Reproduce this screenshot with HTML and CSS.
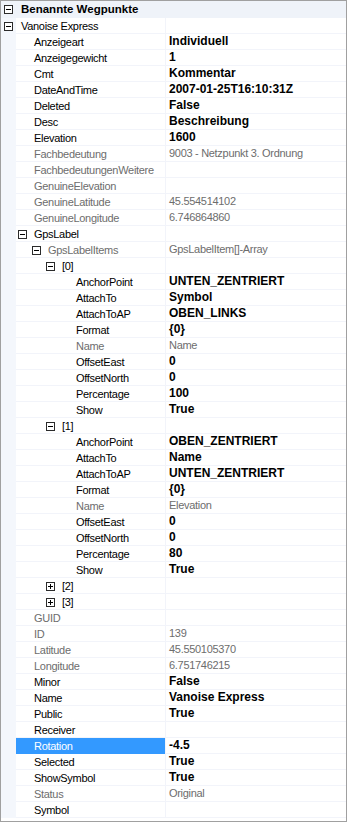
FILE: index.html
```html
<!DOCTYPE html>
<html>
<head>
<meta charset="utf-8">
<link rel="stylesheet" href="styles.css">
</head>
<body>
<div class="grid">
  <div class="cat"><span class="mg"><i class="tog"></i></span><span class="catname">Benannte Wegpunkte</span></div>

  <div class="row"><span class="mg"><i class="tog"></i></span><span class="nm p0">Vanoise Express</span><span class="vl"></span></div>

  <div class="row"><span class="mg"></span><span class="nm p1">Anzeigeart</span><span class="vl b">Individuell</span></div>
  <div class="row"><span class="mg"></span><span class="nm p1">Anzeigegewicht</span><span class="vl b">1</span></div>
  <div class="row"><span class="mg"></span><span class="nm p1">Cmt</span><span class="vl b">Kommentar</span></div>
  <div class="row"><span class="mg"></span><span class="nm p1">DateAndTime</span><span class="vl b">2007-01-25T16:10:31Z</span></div>
  <div class="row"><span class="mg"></span><span class="nm p1">Deleted</span><span class="vl b">False</span></div>
  <div class="row"><span class="mg"></span><span class="nm p1">Desc</span><span class="vl b">Beschreibung</span></div>
  <div class="row"><span class="mg"></span><span class="nm p1">Elevation</span><span class="vl b">1600</span></div>
  <div class="row"><span class="mg"></span><span class="nm p1 ro">Fachbedeutung</span><span class="vl ro">9003 - Netzpunkt 3. Ordnung</span></div>
  <div class="row"><span class="mg"></span><span class="nm p1 ro">FachbedeutungenWeitere</span><span class="vl"></span></div>
  <div class="row"><span class="mg"></span><span class="nm p1 ro">GenuineElevation</span><span class="vl"></span></div>
  <div class="row"><span class="mg"></span><span class="nm p1 ro">GenuineLatitude</span><span class="vl ro">45.554514102</span></div>
  <div class="row"><span class="mg"></span><span class="nm p1 ro">GenuineLongitude</span><span class="vl ro">6.746864860</span></div>
  <div class="row"><span class="mg"></span><span class="nm b1"><i class="tog"></i>GpsLabel</span><span class="vl"></span></div>
  <div class="row"><span class="mg"></span><span class="nm b2 ro"><i class="tog"></i>GpsLabelItems</span><span class="vl ro">GpsLabelItem[]-Array</span></div>
  <div class="row"><span class="mg"></span><span class="nm b3"><i class="tog"></i>[0]</span><span class="vl"></span></div>
  <div class="row"><span class="mg"></span><span class="nm p4">AnchorPoint</span><span class="vl b">UNTEN_ZENTRIERT</span></div>
  <div class="row"><span class="mg"></span><span class="nm p4">AttachTo</span><span class="vl b">Symbol</span></div>
  <div class="row"><span class="mg"></span><span class="nm p4">AttachToAP</span><span class="vl b">OBEN_LINKS</span></div>
  <div class="row"><span class="mg"></span><span class="nm p4">Format</span><span class="vl b">{0}</span></div>
  <div class="row"><span class="mg"></span><span class="nm p4 ro">Name</span><span class="vl ro">Name</span></div>
  <div class="row"><span class="mg"></span><span class="nm p4">OffsetEast</span><span class="vl b">0</span></div>
  <div class="row"><span class="mg"></span><span class="nm p4">OffsetNorth</span><span class="vl b">0</span></div>
  <div class="row"><span class="mg"></span><span class="nm p4">Percentage</span><span class="vl b">100</span></div>
  <div class="row"><span class="mg"></span><span class="nm p4">Show</span><span class="vl b">True</span></div>
  <div class="row"><span class="mg"></span><span class="nm b3"><i class="tog"></i>[1]</span><span class="vl"></span></div>
  <div class="row"><span class="mg"></span><span class="nm p4">AnchorPoint</span><span class="vl b">OBEN_ZENTRIERT</span></div>
  <div class="row"><span class="mg"></span><span class="nm p4">AttachTo</span><span class="vl b">Name</span></div>
  <div class="row"><span class="mg"></span><span class="nm p4">AttachToAP</span><span class="vl b">UNTEN_ZENTRIERT</span></div>
  <div class="row"><span class="mg"></span><span class="nm p4">Format</span><span class="vl b">{0}</span></div>
  <div class="row"><span class="mg"></span><span class="nm p4 ro">Name</span><span class="vl ro">Elevation</span></div>
  <div class="row"><span class="mg"></span><span class="nm p4">OffsetEast</span><span class="vl b">0</span></div>
  <div class="row"><span class="mg"></span><span class="nm p4">OffsetNorth</span><span class="vl b">0</span></div>
  <div class="row"><span class="mg"></span><span class="nm p4">Percentage</span><span class="vl b">80</span></div>
  <div class="row"><span class="mg"></span><span class="nm p4">Show</span><span class="vl b">True</span></div>
  <div class="row"><span class="mg"></span><span class="nm b3"><i class="tog plus"></i>[2]</span><span class="vl"></span></div>
  <div class="row"><span class="mg"></span><span class="nm b3"><i class="tog plus"></i>[3]</span><span class="vl"></span></div>
  <div class="row"><span class="mg"></span><span class="nm p1 ro">GUID</span><span class="vl"></span></div>
  <div class="row"><span class="mg"></span><span class="nm p1 ro">ID</span><span class="vl ro">139</span></div>
  <div class="row"><span class="mg"></span><span class="nm p1 ro">Latitude</span><span class="vl ro">45.550105370</span></div>
  <div class="row"><span class="mg"></span><span class="nm p1 ro">Longitude</span><span class="vl ro">6.751746215</span></div>
  <div class="row"><span class="mg"></span><span class="nm p1">Minor</span><span class="vl b">False</span></div>
  <div class="row"><span class="mg"></span><span class="nm p1">Name</span><span class="vl b">Vanoise Express</span></div>
  <div class="row"><span class="mg"></span><span class="nm p1">Public</span><span class="vl b">True</span></div>
  <div class="row"><span class="mg"></span><span class="nm p1">Receiver</span><span class="vl"></span></div>
  <div class="row"><span class="mg"></span><span class="nm p1 sel">Rotation</span><span class="vl b">-4.5</span></div>
  <div class="row"><span class="mg"></span><span class="nm p1">Selected</span><span class="vl b">True</span></div>
  <div class="row"><span class="mg"></span><span class="nm p1">ShowSymbol</span><span class="vl b">True</span></div>
  <div class="row"><span class="mg"></span><span class="nm p1 ro">Status</span><span class="vl ro">Original</span></div>
  <div class="row"><span class="mg"></span><span class="nm p1">Symbol</span><span class="vl"></span></div>
</div>
</body>
</html>
```

FILE: styles.css
```css
html, body {
  margin: 0;
  padding: 0;
  background: #ffffff;
}
body {
  font-family: "Liberation Sans", Arial, sans-serif;
  font-size: 11px;
  color: #000000;
}
.grid {
  width: 347px;
  height: 822px;
  box-sizing: border-box;
  border: 1px solid #a0a0a0;
  background: #ffffff;
  padding-bottom: 2px;
  overflow: hidden;
}
.cat {
  display: flex;
  align-items: center;
  height: 17px;
  background: #eff3f9;
}
.catname {
  font-weight: bold;
  font-size: 11.5px;
  padding-left: 5px;
  line-height: 17px;
}
.row {
  display: grid;
  grid-template-columns: 15px 149px 1px 1fr;
  height: 15px;
  border-bottom: 1px solid #f2f4fa;
}
.row::after {
  content: "";
}
.mg {
  background: #f4f7fc;
  display: flex;
  align-items: center;
  justify-content: flex-start;
  padding-left: 3px;
  height: 16px;
}
.cat .mg {
  width: 15px;
  box-sizing: border-box;
  background: transparent;
  height: 17px;
}
.row .mg {
  box-sizing: border-box;
}
.nm {
  grid-column: 2;
  display: flex;
  align-items: center;
  white-space: nowrap;
  overflow: hidden;
  line-height: 15px;
  letter-spacing: -0.3px;
  box-sizing: border-box;
}
.vl {
  grid-column: 4;
  line-height: 15px;
  padding-left: 3px;
  white-space: nowrap;
  overflow: hidden;
  letter-spacing: -0.3px;
  border-left: 1px solid #f2f4fa;
  margin-left: -1px;
}
.vl.b {
  font-weight: bold;
  font-size: 12px;
  letter-spacing: 0;
}
.ro {
  color: #6d6d6d;
}
.p0 { padding-left: 5px; }
.p1 { padding-left: 18px; }
.p4 { padding-left: 60px; }
.b1 { padding-left: 2px; }
.b2 { padding-left: 16px; }
.b3 { padding-left: 30px; }
.sel {
  background: #3399ff;
  color: #ffffff;
}
.tog {
  display: inline-block;
  position: relative;
  width: 9px;
  height: 9px;
  box-sizing: border-box;
  border: 1px solid #2b2b2b;
  background: #ffffff;
  flex: 0 0 9px;
}
.nm .tog {
  margin-right: 7px;
}
.tog::before {
  content: "";
  position: absolute;
  left: 1px;
  top: 3px;
  width: 5px;
  height: 1px;
  background: #000000;
}
.tog.plus::after {
  content: "";
  position: absolute;
  left: 3px;
  top: 1px;
  width: 1px;
  height: 5px;
  background: #000000;
}
```
